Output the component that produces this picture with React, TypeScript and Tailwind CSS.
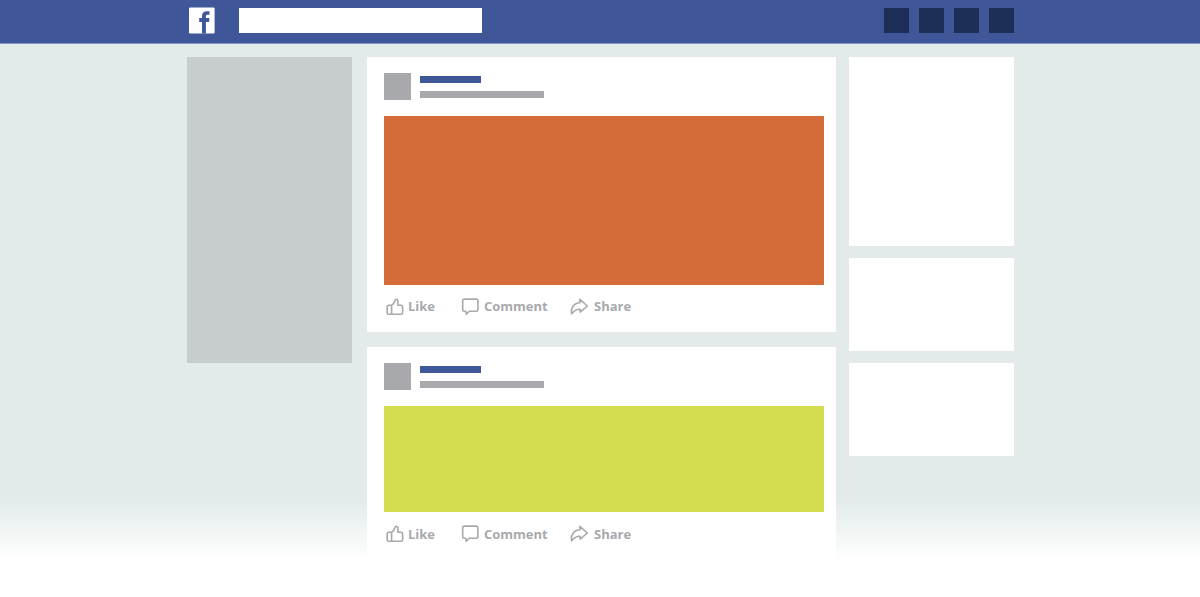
import React from "react";

function LogoIcon() {
  return (
    <svg className="h-[27px] w-[26px] shrink-0" viewBox="0 0 26 27">
      <rect x="0" y="0.5" width="25.6" height="25.9" rx="1.2" fill="#fff" />
      <path
        d="M13 26.6V15H10.2V11.1H13V9.1C13 5.8 14.8 4.3 17.8 4.3H20.5V7.8H18.7C17.3 7.8 16.9 8.4 16.9 9.5V11.1H20.5L20 15H16.9V26.6Z"
        fill="#3f5799"
      />
    </svg>
  );
}

const stroke = {
  fill: "none",
  stroke: "#a8a9ad",
  strokeWidth: 1.6,
  strokeLinejoin: "round" as const,
  strokeLinecap: "round" as const,
};

function LikeIcon() {
  return (
    <svg className="h-[18px] w-[18px] shrink-0" viewBox="0 0 18 18" {...stroke}>
      <path d="M5.4 7.3H2.5Q1.2 7.3 1.2 8.6V14.9Q1.2 16.2 2.5 16.2H15.1Q16.6 16.2 16.6 14.7V8.9Q16.6 7.3 15 7.3H11.9V3.4Q11.9 1.4 10.3 1.4Q9.3 1.4 8.9 2.7Q8 5.6 5.6 7.4V14.7Q5.6 15.8 6.4 16.2" />
    </svg>
  );
}

function CommentIcon() {
  return (
    <svg className="h-[18px] w-[18px] shrink-0" viewBox="0 0 18 18" {...stroke}>
      <path d="M3.4 1.1H15.2Q16.9 1.1 16.9 2.8V11.5Q16.9 13.2 15.2 13.2H8.3L5.2 16.2L4.7 13.2H3.4Q1.7 13.2 1.7 11.5V2.8Q1.7 1.1 3.4 1.1Z" />
    </svg>
  );
}

function ShareIcon() {
  return (
    <svg className="h-[18px] w-[18px] shrink-0" viewBox="0 0 18 18" {...stroke}>
      <path d="M9.9 1.4L17.3 8L10.2 14.1V11.2C6.4 11 4.3 12.3 1.7 15.9C.4 10.6 3.6 5 9.9 4.8Z" />
    </svg>
  );
}

function Action({ icon, label, className }: { icon: React.ReactNode; label: string; className: string }) {
  return (
    <div className={`flex items-center ${className}`}>
      {icon}
      <span className="whitespace-nowrap">{label}</span>
    </div>
  );
}

function Post({ className, mediaClass }: { className: string; mediaClass: string }) {
  return (
    <article className={`bg-white pl-[17.5px] pr-[12.5px] pt-4 ${className}`}>
      <div className="flex h-[43px]">
        <div className="h-[27px] w-[27px] bg-[#a8a9ad]" />
        <div className="ml-[9px] pt-[3px]">
          <div className="h-[7px] w-[61px] bg-[#3f5799]" />
          <div className="mt-[8px] h-[7px] w-[124px] bg-[#a8a9ad]" />
        </div>
      </div>
      <div className={mediaClass} />
      <div className="mt-[13px] flex h-[18px] font-['Open_Sans',sans-serif] text-[13px] font-bold text-[#a8a9ad]">
        <Action icon={<LikeIcon />} label="Like" className="ml-[2px] w-[75px] gap-[4px]" />
        <Action icon={<CommentIcon />} label="Comment" className="w-[109px] gap-[5px]" />
        <Action icon={<ShareIcon />} label="Share" className="gap-[6px]" />
      </div>
    </article>
  );
}

export default function App() {
  return (
    <div className="relative flex h-[597px] w-[1200px] flex-col overflow-hidden bg-[#e2ebea]">
      <header className="h-[43px] shrink-0 border-b border-[#8492c0] bg-[#3f5799] box-content">
        <div className="flex h-[34px] items-start pl-[189px] pr-[186px] pt-2">
          <div className="-mt-px">
            <LogoIcon />
          </div>
          <div className="ml-6 h-[25px] w-[243px] bg-white" />
          <div className="ml-auto flex gap-[9.5px]">
            {[0, 1, 2, 3].map((i) => (
              <div key={i} className="h-[25px] w-[25.5px] bg-[#1c2e55]" />
            ))}
          </div>
        </div>
      </header>
      <main className="flex items-start pl-[187px] pt-[13px]">
        <aside className="h-[306px] w-[164.5px] bg-[#c7ccce]" />
        <section className="ml-[15px] w-[469.9px]">
          <Post className="h-[275px]" mediaClass="h-[169px] bg-[#d46b38]" />
          <Post className="mt-[15px] h-[250px]" mediaClass="h-[106.4px] bg-[#d4dd50]" />
        </section>
        <aside className="ml-[13px] flex w-[164.6px] flex-col gap-3">
          <div className="h-[189px] bg-white" />
          <div className="h-[93px] bg-white" />
          <div className="h-[93px] bg-white" />
        </aside>
      </main>
      <div className="pointer-events-none absolute inset-x-0 bottom-0 flex h-[97px]">
        <div className="w-[366.5px] bg-linear-to-b from-white/0 to-white to-[60px]" />
        <div className="w-[469.9px] bg-linear-to-b from-white/0 from-[55px] to-white to-[60px]" />
        <div className="flex-1 bg-linear-to-b from-white/0 to-white to-[60px]" />
      </div>
    </div>
  );
}
